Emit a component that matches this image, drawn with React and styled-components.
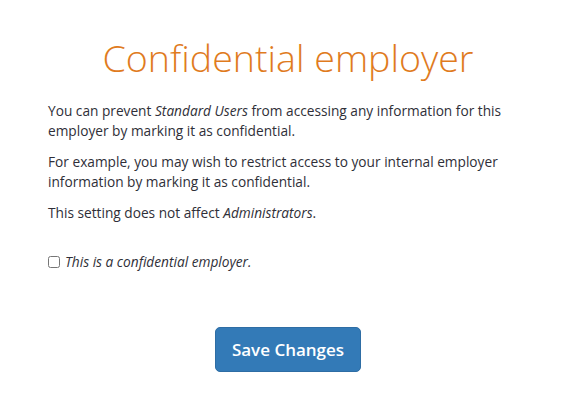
import styled, { createGlobalStyle } from "styled-components";

const GlobalStyle = createGlobalStyle`
  body {
    margin: 0;
    background: #fff;
    font-family: "Open Sans", "Noto Sans", sans-serif;
    color: #2f2f38;
  }
`;

const Page = styled.div`
  padding: 34px 43px 40px 48px;
`;

const Title = styled.h1`
  margin: 0 0 19px;
  text-align: center;
  font-size: 37.6px;
  font-weight: 300;
  color: #e07b1e;
  line-height: 48px;
`;

const Para = styled.p`
  margin: 0 0 11px;
  font-size: 13.7px;
  line-height: 20px;
`;

const CheckRow = styled.label`
  display: flex;
  align-items: center;
  gap: 5px;
  margin-top: 29px;
  font-size: 13.7px;
  font-style: italic;
`;

const Box = styled.input`
  margin: 0;
  width: 12px;
  height: 12px;
`;

const Actions = styled.div`
  display: flex;
  justify-content: center;
  margin-top: 56px;
`;

const SaveButton = styled.button`
  width: 146px;
  height: 45px;
  border: 1px solid #2e6da4;
  border-radius: 5px;
  background: #337ab7;
  color: #fff;
  font-family: inherit;
  font-size: 17px;
  font-weight: 600;
  cursor: pointer;
`;

export default function App() {
  return (
    <>
      <GlobalStyle />
      <Page>
        <Title>Confidential employer</Title>
        <Para>
          You can prevent <em>Standard Users</em> from accessing any information for this
          employer by marking it as confidential.
        </Para>
        <Para>
          For example, you may wish to restrict access to your internal employer
          information by marking it as confidential.
        </Para>
        <Para>
          This setting does not affect <em>Administrators</em>.
        </Para>
        <CheckRow>
          <Box type="checkbox" />
          This is a confidential employer.
        </CheckRow>
        <Actions>
          <SaveButton>Save Changes</SaveButton>
        </Actions>
      </Page>
    </>
  );
}
